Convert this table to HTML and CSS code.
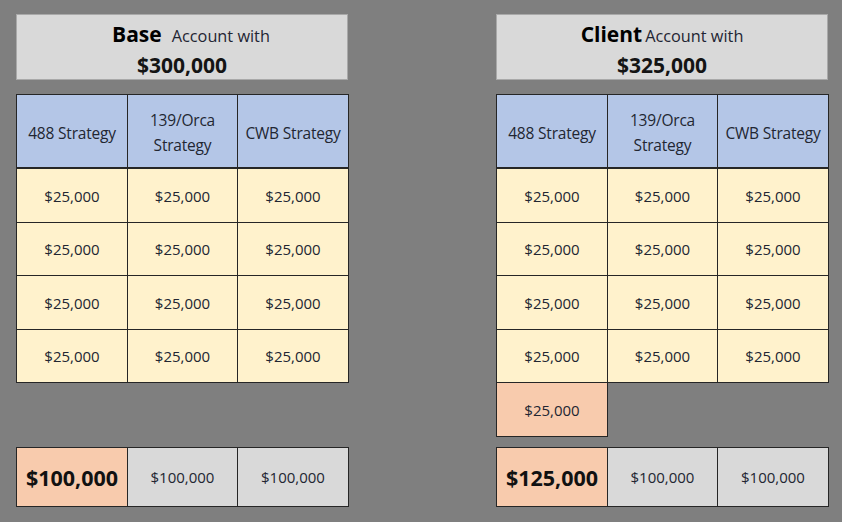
FILE: index.html
```html
<!DOCTYPE html>
<html>
<head>
<meta charset="utf-8">
<link rel="stylesheet" href="styles.css">
</head>
<body>
<div class="page">
  <section class="panel">
    <div class="title">
      <div class="title-line offset"><span class="big">Base</span> <span class="small">Account with</span></div>
      <div class="title-amount">$300,000</div>
    </div>
    <div class="grid">
      <div class="cell head">488 Strategy</div>
      <div class="cell head">139/Orca<br>Strategy</div>
      <div class="cell head">CWB Strategy</div>
      <div class="cell val">$25,000</div><div class="cell val">$25,000</div><div class="cell val">$25,000</div>
      <div class="cell val">$25,000</div><div class="cell val">$25,000</div><div class="cell val">$25,000</div>
      <div class="cell val">$25,000</div><div class="cell val">$25,000</div><div class="cell val">$25,000</div>
      <div class="cell val">$25,000</div><div class="cell val">$25,000</div><div class="cell val">$25,000</div>
    </div>
    <div class="extra empty"></div>
    <div class="totals">
      <div class="tcell peach bold">$100,000</div>
      <div class="tcell">$100,000</div>
      <div class="tcell">$100,000</div>
    </div>
  </section>
  <section class="panel">
    <div class="title">
      <div class="title-line tight"><span class="big">Client</span><span class="small">Account with</span></div>
      <div class="title-amount">$325,000</div>
    </div>
    <div class="grid">
      <div class="cell head">488 Strategy</div>
      <div class="cell head">139/Orca<br>Strategy</div>
      <div class="cell head">CWB Strategy</div>
      <div class="cell val">$25,000</div><div class="cell val">$25,000</div><div class="cell val">$25,000</div>
      <div class="cell val">$25,000</div><div class="cell val">$25,000</div><div class="cell val">$25,000</div>
      <div class="cell val">$25,000</div><div class="cell val">$25,000</div><div class="cell val">$25,000</div>
      <div class="cell val">$25,000</div><div class="cell val">$25,000</div><div class="cell val">$25,000</div>
    </div>
    <div class="extra">$25,000</div>
    <div class="totals">
      <div class="tcell peach bold">$125,000</div>
      <div class="tcell">$100,000</div>
      <div class="tcell">$100,000</div>
    </div>
  </section>
</div>
</body>
</html>
```

FILE: styles.css
```css
html, body {
  margin: 0;
  padding: 0;
  background: #7f7f7f;
}
body {
  width: 842px;
  height: 522px;
  overflow: hidden;
  font-family: "Open Sans", "Liberation Sans", sans-serif;
  color: #222632;
}
.page {
  display: flex;
  gap: 147px;
  padding: 14px 0 0 16px;
}
.panel {
  width: 333px;
  display: flex;
  flex-direction: column;
}
.title {
  width: 330px;
  height: 64px;
  box-sizing: content-box;
  background: #d9d9d9;
  border: 1px solid #a9a9a9;
  display: flex;
  flex-direction: column;
  align-items: center;
  padding: 0;
  margin-bottom: 14px;
  color: #000;
}
.title-line {
  display: flex;
  align-items: baseline;
  gap: 8px;
  line-height: 28px;
  margin-top: 5px;
}
.title-line.offset {
  gap: 10px;
  padding-left: 18px;
}
.title-line.tight {
  gap: 3px;
}
.big {
  font-size: 21px;
  font-weight: 700;
}
.small {
  font-size: 16.3px;
  color: #1f2533;
}
.title-amount {
  font-size: 21px;
  font-weight: 700;
  line-height: 30px;
  color: #141414;
}
.grid {
  display: grid;
  grid-template-columns: 110px 109px 110px;
  grid-template-rows: 73px 53px 52px 53px 52px;
  column-gap: 1px;
  row-gap: 1px;
  padding: 1px;
  background: #262626;
  width: 331px;
}
.cell {
  display: flex;
  align-items: center;
  justify-content: center;
  text-align: center;
}
.head {
  background: #b4c6e7;
  font-size: 15.5px;
  line-height: 25px;
  letter-spacing: -0.2px;
  border-bottom: 1px solid #262626;
  box-sizing: border-box;
  padding-top: 4px;
}
.val {
  background: #fff2cc;
  font-size: 15px;
}
.extra {
  width: 110px;
  height: 53px;
  background: #f8cbad;
  border: 1px solid #262626;
  border-top: none;
  display: flex;
  align-items: center;
  justify-content: center;
  font-size: 15px;
}
.extra.empty {
  visibility: hidden;
}
.totals {
  margin-top: 10px;
  display: grid;
  grid-template-columns: 110px 109px 110px;
  column-gap: 1px;
  padding: 1px;
  background: #262626;
  width: 331px;
  height: 58px;
}
.tcell {
  background: #d9d9d9;
  display: flex;
  align-items: center;
  justify-content: center;
  font-size: 15px;
}
.tcell.peach {
  background: #f8cbad;
}
.tcell.bold {
  font-size: 21.5px;
  font-weight: 700;
  color: #111;
}
```
